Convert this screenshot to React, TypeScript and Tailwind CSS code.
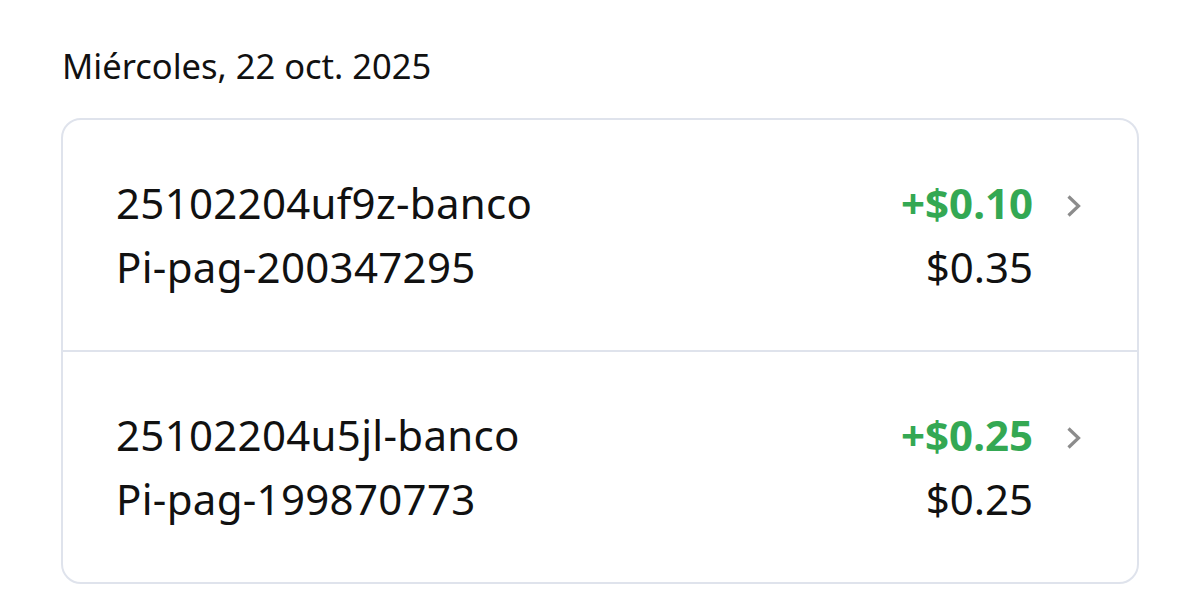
import React from 'react';

interface Movement {
  id: string;
  ref: string;
  amount: string;
  total: string;
}

const movements: Movement[] = [
  { id: '25102204uf9z-banco', ref: 'Pi-pag-200347295', amount: '+$0.10', total: '$0.35' },
  { id: '25102204u5jl-banco', ref: 'Pi-pag-199870773', amount: '+$0.25', total: '$0.25' },
];

function Chevron() {
  return (
    <svg width="18" height="24" viewBox="0 0 18 24" fill="none" className="text-[#8c8c8c]">
      <path d="M3.5 2.5 L13.5 12 L3.5 21.5" stroke="currentColor" strokeWidth="3.2" strokeLinejoin="miter" />
    </svg>
  );
}

export default function App() {
  return (
    <div className="w-[1200px] h-[616px] bg-white text-[#111111] font-['Noto_Sans',sans-serif] px-[61px] pt-[43px]">
      {/* Date header */}
      <h2 className="text-[34.5px] leading-[46px] text-[#111] pl-[1px]">Miércoles, 22 oct. 2025</h2>

      {/* Movements card */}
      <div className="mt-[29px] border-2 border-[#dfe3ec] rounded-[20px] overflow-hidden">
        {movements.map((m, i) => (
          <div
            key={m.id}
            className={`flex items-center pl-[53px] pr-[54px] ${i > 0 ? 'h-[232px] border-t-2 border-[#dfe3ec]' : 'h-[230px]'}`}
          >
            <div className="flex-1 flex flex-col text-[42px] leading-[64px] tracking-[0.3px]">
              <span>{m.id}</span>
              <span>{m.ref}</span>
            </div>
            <div className="flex flex-col items-end text-[42px] leading-[64px]">
              <span className="font-bold text-[#34a853]">{m.amount}</span>
              <span>{m.total}</span>
            </div>
            <div className="w-[50px] self-start pt-[74px] flex justify-end">
              <Chevron />
            </div>
          </div>
        ))}
      </div>
    </div>
  );
}
